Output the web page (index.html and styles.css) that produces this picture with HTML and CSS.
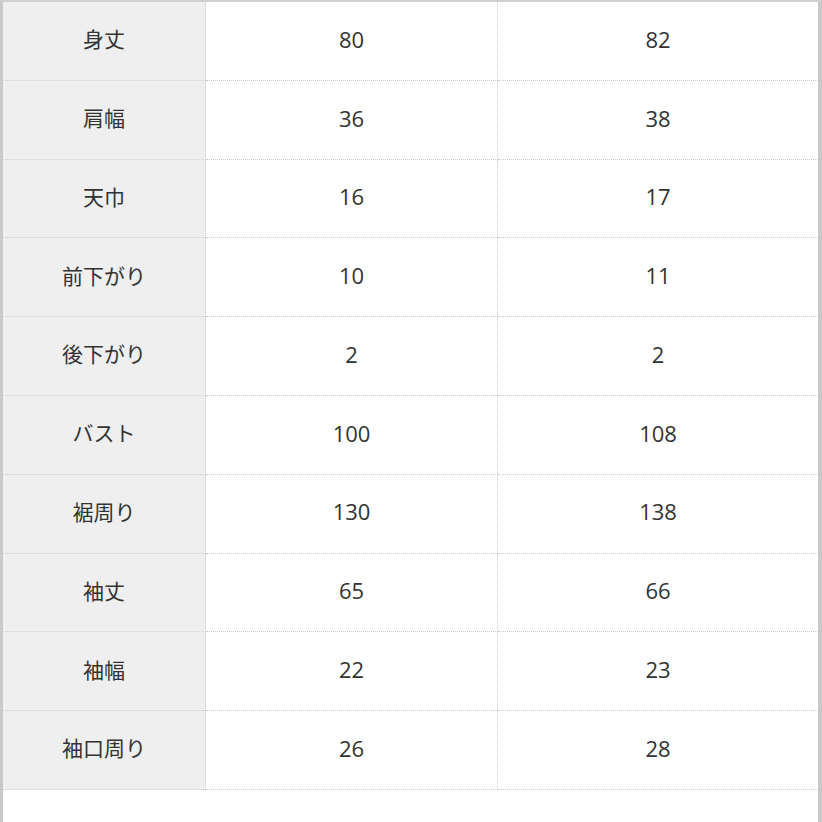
FILE: index.html
```html
<!DOCTYPE html>
<html lang="ja">
<head>
<meta charset="utf-8">
<link rel="stylesheet" href="styles.css">
</head>
<body>
<div class="frame">
  <div class="sheet">
    <div class="cell label">身丈</div><div class="cell">80</div><div class="cell last">82</div>
    <div class="cell label">肩幅</div><div class="cell">36</div><div class="cell last">38</div>
    <div class="cell label">天巾</div><div class="cell">16</div><div class="cell last">17</div>
    <div class="cell label">前下がり</div><div class="cell">10</div><div class="cell last">11</div>
    <div class="cell label">後下がり</div><div class="cell">2</div><div class="cell last">2</div>
    <div class="cell label">バスト</div><div class="cell">100</div><div class="cell last">108</div>
    <div class="cell label">裾周り</div><div class="cell">130</div><div class="cell last">138</div>
    <div class="cell label">袖丈</div><div class="cell">65</div><div class="cell last">66</div>
    <div class="cell label">袖幅</div><div class="cell">22</div><div class="cell last">23</div>
    <div class="cell label">袖口周り</div><div class="cell">26</div><div class="cell last">28</div>
  </div>
</div>
</body>
</html>
```
FILE: styles.css
```css
html, body {
  margin: 0;
  padding: 0;
  background: #ffffff;
}
.frame {
  box-sizing: border-box;
  width: 822px;
  height: 822px;
  border-left: 3px solid #c9c9c9;
  border-top: 2px solid #d0d0d0;
  border-right: 4px solid #c9c9c9;
  background: #ffffff;
}
.sheet {
  display: grid;
  grid-template-columns: 203px 292px 1fr;
  grid-auto-rows: 78.8px;
  font-family: "Open Sans", "Noto Sans CJK JP", sans-serif;
  font-size: 22px;
  line-height: 1.2;
  color: #333333;
}
.cell {
  box-sizing: border-box;
  display: flex;
  align-items: center;
  justify-content: center;
  padding-bottom: 4px;
  border-bottom: 1px dotted #cccccc;
  border-right: 1px dotted #cccccc;
  background: #ffffff;
}
.cell.last {
  border-right: none;
}
.label {
  background: #efefef;
  font-family: "Noto Sans CJK JP", sans-serif;
  font-size: 21px;
}
```
